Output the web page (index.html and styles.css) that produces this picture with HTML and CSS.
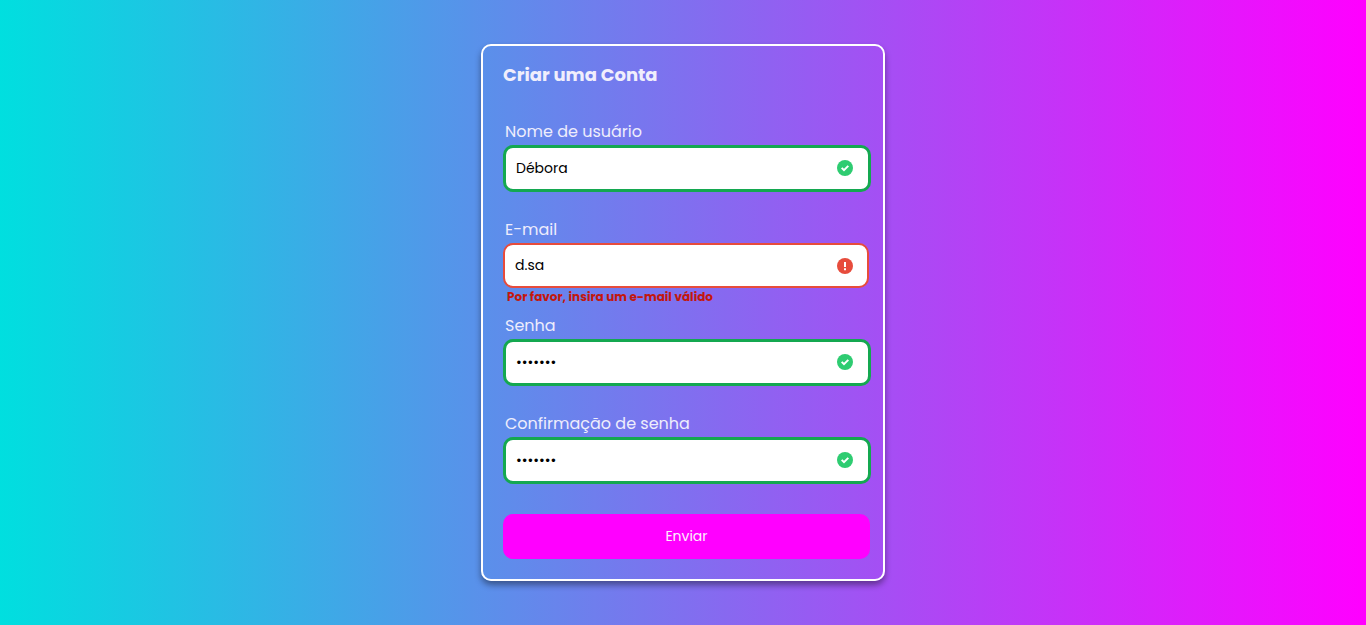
FILE: index.html
```html
<!DOCTYPE html>
<html lang="pt-BR">
<head>
<meta charset="utf-8">
<meta name="viewport" content="width=device-width, initial-scale=1">
<title>Criar uma Conta</title>
<link rel="stylesheet" href="styles.css">
</head>
<body>
<main class="card">
  <h1 class="title">Criar uma Conta</h1>
  <form class="form" novalidate>
    <div class="field valid">
      <label for="username">Nome de usuário</label>
      <div class="control">
        <input type="text" id="username" value="Débora">
        <svg class="icon" viewBox="0 0 16 16" aria-hidden="true"><circle cx="8" cy="8" r="8"/><path d="M4.7 7.9l2.3 2.3 4.3-4.3"/></svg>
      </div>
    </div>
    <div class="field invalid">
      <label for="email">E-mail</label>
      <div class="control">
        <input type="email" id="email" value="d.sa" aria-describedby="email-error">
        <svg class="icon" viewBox="0 0 16 16" aria-hidden="true"><circle cx="8" cy="8" r="8"/><path d="M8 4v5M8 10.3v2"/></svg>
      </div>
      <small class="error" id="email-error">Por favor, insira um e-mail válido</small>
    </div>
    <div class="field valid">
      <label for="password">Senha</label>
      <div class="control">
        <input type="password" id="password" value="1234567">
        <svg class="icon" viewBox="0 0 16 16" aria-hidden="true"><circle cx="8" cy="8" r="8"/><path d="M4.7 7.9l2.3 2.3 4.3-4.3"/></svg>
      </div>
    </div>
    <div class="field valid">
      <label for="confirmation">Confirmação de senha</label>
      <div class="control">
        <input type="password" id="confirmation" value="1234567">
        <svg class="icon" viewBox="0 0 16 16" aria-hidden="true"><circle cx="8" cy="8" r="8"/><path d="M4.7 7.9l2.3 2.3 4.3-4.3"/></svg>
      </div>
    </div>
    <button class="submit" type="submit">Enviar</button>
  </form>
</main>
</body>
</html>
```
FILE: styles.css
```css
* {
  box-sizing: border-box;
}

body {
  margin: 0;
  min-height: 100vh;
  display: flex;
  align-items: center;
  justify-content: center;
  background: linear-gradient(to right, #00dfdf, #ff00ff);
  color: #f0eefc;
  font-family: Poppins, Inter, sans-serif;
  font-size: 16px;
}

.card {
  width: 100%;
  max-width: 404px;
  padding: 20px 12px 20px 20px;
  border: 2px solid #fff;
  border-radius: 10px;
  box-shadow: 0 4px 6px rgba(0, 0, 0, 0.4);
}

.title {
  margin: 0 0 35px;
  font-size: 18px;
  line-height: 18px;
  font-weight: 700;
}

.form {
  display: flex;
  flex-direction: column;
}

.field {
  display: flex;
  flex-direction: column;
  padding-bottom: 25px;
}

.field label {
  padding-left: 2px;
  line-height: 26px;
  color: #eeedfc;
}

.control {
  position: relative;
}

.control input {
  display: block;
  width: 100%;
  height: 47px;
  padding: 0 40px 0 10px;
  border: 3px solid #14a850;
  border-radius: 10px;
  outline: none;
  background: #fff;
  color: #000;
  font-family: inherit;
  font-size: 14px;
}

.icon {
  position: absolute;
  top: 15px;
  right: 18px;
  width: 16px;
  height: 16px;
  fill: #2ecc71;
}

.icon path {
  fill: none;
  stroke: #fff;
  stroke-width: 2;
}

.invalid {
  padding-right: 2px;
  padding-bottom: 7px;
}

.invalid input {
  height: 45px;
  border: 2px solid #e74c3c;
}

.invalid .icon {
  right: 16px;
  fill: #e74c3c;
}

.error {
  padding-left: 4px;
  font-size: 12px;
  line-height: 18px;
  font-weight: 700;
  color: #c4170c;
}

.submit {
  height: 45px;
  margin: 5px 1px 0 0;
  border: 0;
  border-radius: 10px;
  background: #ff00ff;
  color: #fdeefd;
  font-family: inherit;
  font-size: 14px;
  cursor: pointer;
}
```
